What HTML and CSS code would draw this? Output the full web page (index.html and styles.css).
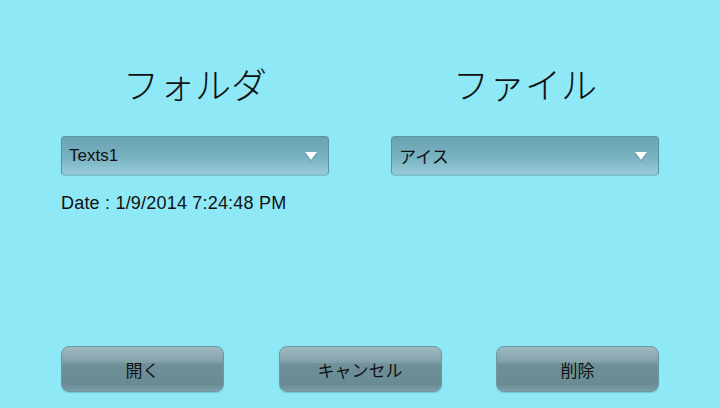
FILE: index.html
```html
<!DOCTYPE html>
<html lang="ja">
<head>
<meta charset="utf-8">
<title>フォルダ</title>
<link rel="stylesheet" href="styles.css">
</head>
<body>
<div class="page">
  <div class="columns">
    <section class="col">
      <h1 class="title">フォルダ</h1>
      <div class="select"><span class="select-text">Texts1</span><span class="arrow"></span></div>
      <p class="date">Date : 1/9/2014 7:24:48 PM</p>
    </section>
    <section class="col">
      <h1 class="title">ファイル</h1>
      <div class="select"><span class="select-text">アイス</span><span class="arrow"></span></div>
    </section>
  </div>
  <div class="buttons">
    <button class="btn">開く</button>
    <button class="btn">キャンセル</button>
    <button class="btn">削除</button>
  </div>
</div>
</body>
</html>
```

FILE: styles.css
```css
html, body {
  margin: 0;
  padding: 0;
}
body {
  background: #8ee8f6;
  font-family: "Liberation Sans", "Noto Sans CJK JP", sans-serif;
  color: #111;
}
.page {
  width: 720px;
  height: 408px;
  box-sizing: border-box;
  padding: 0 61px 16px 61px;
  display: flex;
  flex-direction: column;
}
.columns {
  display: grid;
  grid-template-columns: 268px 268px;
  column-gap: 62px;
  flex: 1;
}
.col {
  display: flex;
  flex-direction: column;
}
.title {
  margin: 62px 0 0 0;
  height: 42px;
  line-height: 42px;
  font-size: 36px;
  font-weight: 300;
  text-align: center;
  font-family: "Noto Sans CJK JP", sans-serif;
  color: #111;
}
.select {
  margin-top: 32px;
  height: 39px;
  box-sizing: border-box;
  border: 1px solid #5d95a3;
  border-bottom-color: #86bac6;
  border-radius: 4px;
  background: linear-gradient(to bottom, #6aa4b4 0%, #78b2c1 55%, #98ccd8 100%);
  box-shadow: 0 1px 1px rgba(60, 120, 135, 0.35);
  display: flex;
  align-items: center;
  justify-content: space-between;
  padding: 0 11px 0 7px;
}
.select-text {
  font-size: 17px;
  color: #111;
  font-family: "Liberation Sans", "Noto Sans CJK JP", sans-serif;
}
.arrow {
  width: 0;
  height: 0;
  border-left: 6px solid transparent;
  border-right: 6px solid transparent;
  border-top: 8px solid #ffffff;
  filter: drop-shadow(0 1px 0 rgba(40, 90, 105, 0.5));
}
.date {
  margin: 18px 0 0 0;
  font-size: 18px;
  line-height: 21px;
  letter-spacing: 0.2px;
  color: #111;
}
.buttons {
  display: flex;
  justify-content: space-between;
}
.btn {
  width: 163px;
  height: 46px;
  box-sizing: border-box;
  border: 1px solid #6d97a2;
  border-radius: 8px;
  background:
    linear-gradient(to bottom, rgba(255,255,255,0.18) 0%, rgba(255,255,255,0.10) 35%, rgba(255,255,255,0) 36%),
    linear-gradient(to bottom, #8aaab2 0%, #6e8f98 45%, #6a8a94 85%, #7d9ea7 100%);
  box-shadow: 0 1px 1px rgba(60, 110, 120, 0.3);
  font-family: "Liberation Sans", "Noto Sans CJK JP", sans-serif;
  font-size: 17px;
  color: #111;
  padding: 0;
}
```
